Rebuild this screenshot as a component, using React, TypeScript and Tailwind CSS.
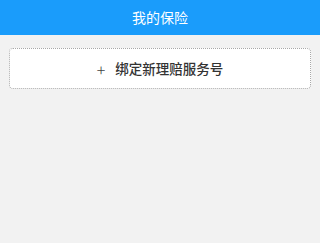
export default function App() {
  return (
    <div
      className="min-h-[243px] w-[320px] bg-[#f2f2f2]"
      style={{ fontFamily: '"Noto Sans CJK SC", "Noto Sans", sans-serif' }}
    >
      <header className="flex h-[35px] items-center justify-center bg-[#1a9cfb] text-[14px] text-white">
        我的保险
      </header>
      <div className="px-[9px] pt-[13px]">
        <button className="flex h-[41px] w-full items-center justify-center gap-[10px] rounded-[4px] border border-dotted border-[#a8a8a8] bg-white text-[13.5px] font-medium text-[#333]">
          <span className="text-[16px] font-light leading-none text-[#444]">+</span>
          <span>绑定新理赔服务号</span>
        </button>
      </div>
    </div>
  );
}
